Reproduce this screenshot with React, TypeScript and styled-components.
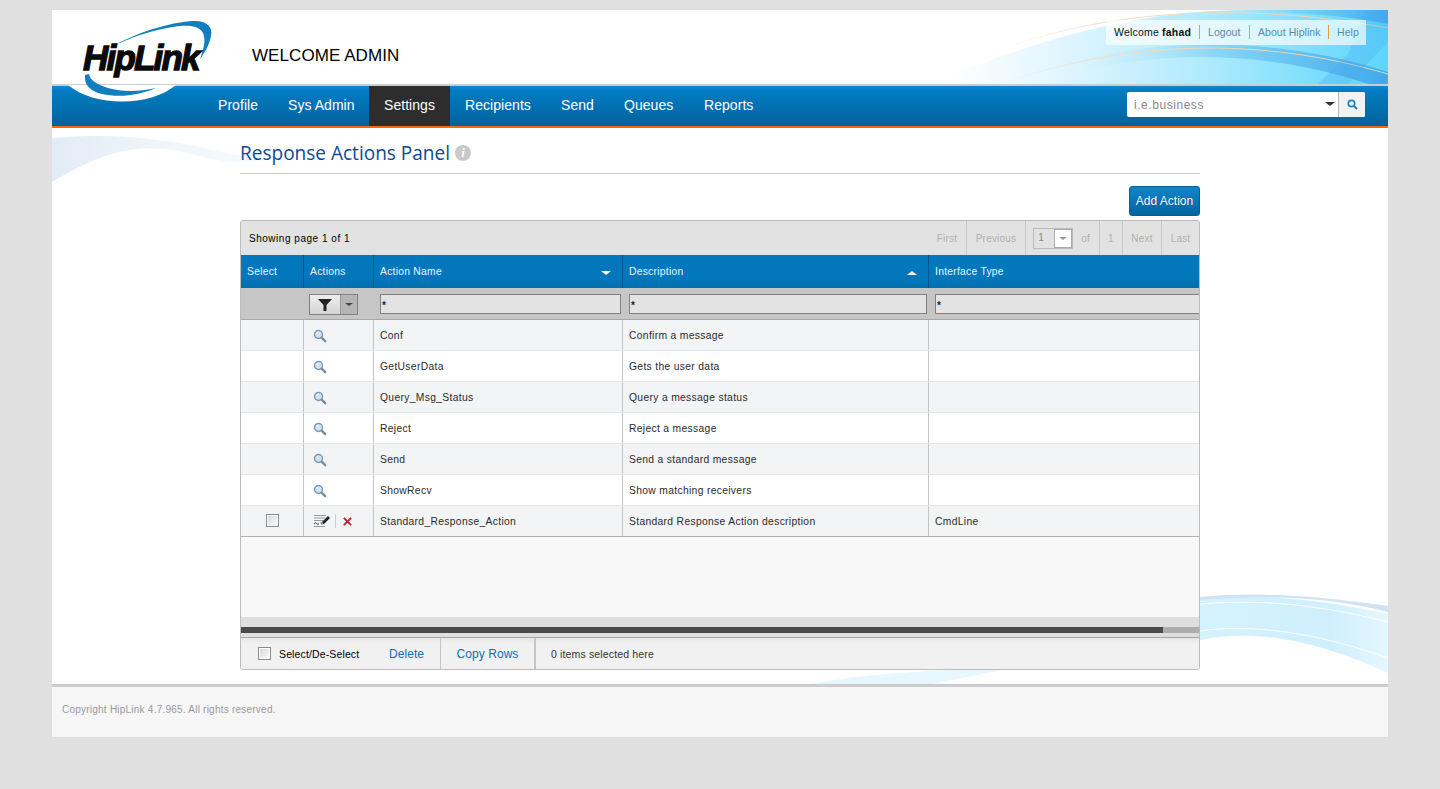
import React from 'react';
import styled, { createGlobalStyle } from 'styled-components';

const Global = createGlobalStyle`
  html, body { margin: 0; padding: 0; background: #e0e0e0; }
  body { font-family: "Liberation Sans", Arial, sans-serif; color: #222; }
  * { box-sizing: border-box; }
`;

const Page = styled.div`
  position: relative;
  width: 1336px;
  margin: 10px 0 0 52px;
  background: #fff;
  overflow: hidden;
`;

const Header = styled.header`
  position: relative;
  height: 74px;
  padding-left: 200px;
  display: flex;
  align-items: center;
  background: #fff;
`;
const HeaderArt = styled.svg`
  position: absolute;
  right: 0;
  top: 0;
`;
const Welcome = styled.h1`
  position: relative;
  margin: 18px 0 0;
  font-size: 17px;
  font-weight: 400;
  letter-spacing: 0.07px;
  color: #000;
  line-height: 20px;
`;
const TopLinks = styled.div`
  position: absolute;
  top: 10px;
  left: 1054px;
  width: 260px;
  height: 25px;
  padding: 0 0 2px 8px;
  display: flex;
  align-items: center;
  background: rgba(255, 255, 255, 0.68);
  font-size: 10.5px;
  letter-spacing: 0.05px;
`;
const Greeting = styled.span`
  color: #111;
  width: 85px;
  letter-spacing: 0.2px;
  white-space: nowrap;
  b { font-weight: 700; }
`;
const TopLink = styled.a<{ $w: number }>`
  width: ${p => p.$w}px;
  height: 14px;
  line-height: 14px;
  padding-left: 8px;
  border-left: 1px solid #e8a030;
  color: #5a88ad;
  white-space: nowrap;
`;

const GrayLine = styled.div`
  height: 2px;
  background: #ccc;
`;
const Nav = styled.nav`
  position: relative;
  height: 42px;
  padding-left: 151px;
  display: flex;
  background: linear-gradient(#0a86d0 0, #0a86d0 2px, #047dc4 3px, #00629c 100%);
  border-bottom: 2px solid #f46a0a;
`;
const NavItem = styled.a<{ $active?: boolean; $w: number }>`
  width: ${p => p.$w}px;
  height: 40px;
  padding: 0 0 2px 15px;
  display: flex;
  align-items: center;
  font-size: 14px;
  letter-spacing: 0.05px;
  color: #fff;
  white-space: nowrap;
  background: ${p => (p.$active ? '#2d2d2d' : 'transparent')};
`;
const Search = styled.div`
  position: absolute;
  left: 1075px;
  top: 6px;
  width: 238px;
  height: 25px;
  display: flex;
  background: #fff;
  border-radius: 2px;
`;
const SearchText = styled.div`
  flex: 1;
  padding-left: 7px;
  font-size: 12px;
  line-height: 26px;
  letter-spacing: 0.55px;
  color: #85888c;
  position: relative;
`;
const Caret = styled.i<{ $c: string; $s: number; $up?: boolean }>`
  display: block;
  width: 0;
  height: 0;
  border-left: ${p => p.$s}px solid transparent;
  border-right: ${p => p.$s}px solid transparent;
  ${p => (p.$up ? 'border-bottom' : 'border-top')}: ${p => Math.round(p.$s * 0.8)}px solid ${p => p.$c};
`;
const SearchCaret = styled.span`
  position: absolute;
  right: 3px;
  top: 10px;
`;
const SearchBtn = styled.div`
  width: 27px;
  border-left: 1px solid #b5b5b5;
  background: #f2f2f2;
  display: flex;
  align-items: center;
  justify-content: center;
  border-radius: 0 2px 2px 0;
`;

const Logo = styled.svg`
  position: absolute;
  left: 0;
  top: 0;
`;

const Content = styled.main`
  position: relative;
  height: 556px;
  padding-left: 188px;
  background: #fff;
`;
const ContentArt = styled.svg`
  position: absolute;
  left: 0;
  top: 0;
`;
const Column = styled.div`
  position: relative;
  width: 960px;
`;
const TitleRow = styled.div`
  height: 46px;
  display: flex;
  align-items: center;
  gap: 5px;
  padding-top: 4px;
  border-bottom: 1px solid #ccc;
`;
const Title = styled.h2`
  margin: 0;
  font-family: "Open Sans", sans-serif;
  font-size: 19.05px;
  font-weight: 400;
  color: #0b4a94;
  white-space: nowrap;
`;
const InfoIcon = styled.span`
  width: 16px;
  height: 16px;
  border-radius: 50%;
  background: #c9c9c9;
  color: #fff;
  font: italic 700 13px/16px "Liberation Serif", serif;
  text-align: center;
`;
const ActionBar = styled.div`
  height: 46px;
  padding-top: 12px;
  display: flex;
  justify-content: flex-end;
`;
const AddBtn = styled.button`
  width: 71px;
  height: 30px;
  padding: 0;
  border: 1px solid #0a5c90;
  border-radius: 3px;
  background: linear-gradient(#0e86cc, #05639f);
  color: #fff;
  font: 12px "Liberation Sans", Arial, sans-serif;
  text-shadow: 0 0 1px rgba(0,0,0,.4);
`;

const Grid = styled.section`
  height: 450px;
  border: 1px solid #bcbcbc;
  border-radius: 3px;
  background: #f8f8f8;
  overflow: hidden;
`;
const Pager = styled.div`
  height: 34px;
  display: flex;
  align-items: stretch;
  background: #e2e2e2;
  font-size: 10px;
`;
const PageInfo = styled.div`
  flex: 1;
  padding-left: 8px;
  line-height: 35px;
  color: #000;
  letter-spacing: 0.52px;
`;
const PagerCell = styled.div<{ $w: number; $first?: boolean }>`
  width: ${p => p.$w}px;
  display: flex;
  align-items: center;
  justify-content: center;
  gap: 8px;
  color: #b0b0b0;
  letter-spacing: 0.2px;
  border-left: ${p => (p.$first ? 'none' : '1px solid #c8c8c8')};
`;
const PageInput = styled.div`
  width: 40px;
  height: 21px;
  margin-left: -2px;
  border: 1px solid #bbb;
  display: flex;
  justify-content: space-between;
  padding-left: 4px;
  line-height: 17px;
  font-size: 10px;
  color: #888;
`;
const PageSelect = styled.div`
  width: 18px;
  height: 19px;
  border: 1px solid #aaa;
  background: #fff;
  display: flex;
  align-items: center;
  justify-content: center;
`;

const cols = '63px 70px 249px 306px 1fr';
const HeadRow = styled.div`
  display: grid;
  grid-template-columns: ${cols};
  height: 33px;
  background: linear-gradient(#0377bc 0, #0377bc 70%, #016eae 100%);
`;
const HeadCell = styled.div`
  position: relative;
  display: flex;
  align-items: center;
  justify-content: space-between;
  padding: 0 11px 0 6px;
  font-size: 10.3px;
  letter-spacing: 0.27px;
  color: #eaf6ff;
  border-right: 1px solid #03568c;
  &:last-child { border-right: 0; }
`;
const SortMark = styled.span`
  margin: 3px 0 0;
`;
const FilterRow = styled.div`
  display: grid;
  grid-template-columns: ${cols};
  height: 32px;
  background: #c6c6c6;
  border-bottom: 1px solid #a8a8a8;
`;
const FilterCell = styled.div`
  padding: 6px 2px 0 6px;
  min-width: 0;
`;
const FilterBtnCell = styled(FilterCell)`
  padding-left: 5px;
`;
const FilterInput = styled.div<{ $over?: boolean }>`
  width: ${p => (p.$over ? '290px' : '100%')};
  height: 20px;
  border: 1px solid #808080;
  background: #e3e3e3;
  font: 700 10px/22px "Liberation Sans", Arial, sans-serif;
  color: #15233f;
  padding-left: 1px;
  overflow: hidden;
`;
const FilterBtn = styled.div`
  display: flex;
  width: 49px;
  height: 21px;
  border: 1px solid #808080;
  background: linear-gradient(#eee, #d4d4d4);
`;
const FilterFunnel = styled.span`
  flex: 1;
  display: flex;
  align-items: center;
  justify-content: center;
`;
const FilterDrop = styled.span`
  width: 17px;
  border-left: 1px solid #999;
  background: #b5b5b5;
  display: flex;
  align-items: center;
  justify-content: center;
`;

const Row = styled.div<{ $odd: boolean; $last: boolean }>`
  display: grid;
  grid-template-columns: ${cols};
  height: 31px;
  background: ${p => (p.$odd ? '#f3f4f6' : '#fff')};
  border-bottom: 1px solid ${p => (p.$last ? '#b0b0b0' : '#e6e6e6')};
`;
const Cell = styled.div`
  display: flex;
  align-items: center;
  padding-left: 6px;
  font-size: 10.3px;
  color: #2a2a2a;
  letter-spacing: 0.33px;
  border-right: 1px solid #c4c4c4;
  white-space: nowrap;
  &:last-child { border-right: 0; }
`;
const CheckCell = styled(Cell)`
  padding: 0 0 2px 25px;
`;
const IconCell = styled(Cell)`
  padding-left: 9px;
`;
const Check = styled.span`
  display: block;
  width: 13px;
  height: 13px;
  border: 1px solid #8c8c8c;
  background: linear-gradient(135deg, #cfd3da, #fff);
  box-shadow: inset 0 0 0 1px #fff;
`;
const IconSep = styled.span`
  width: 1px;
  height: 14px;
  background: #ccc;
  margin: 0 7px 0 4px;
`;
const Spacer = styled.div`
  height: 80px;
`;
const ScrollArea = styled.div`
  height: 21px;
  padding-top: 10px;
  background: #dedede;
  border-bottom: 1px solid #a6a6a6;
`;
const ScrollTrack = styled.div`
  height: 6px;
  background: #adadad;
`;
const ScrollThumb = styled.div`
  width: 922px;
  height: 6px;
  background: #4a4a4a;
`;
const GridFoot = styled.div`
  height: 31px;
  display: flex;
  align-items: center;
  background: linear-gradient(#e6e6e6, #f1f1f1 6px);
  font-size: 11px;
`;
const FootCheck = styled.div`
  width: 148px;
  padding-left: 17px;
  display: flex;
  align-items: center;
  gap: 8px;
  color: #000;
  font-size: 10.5px;
  letter-spacing: 0.13px;
  white-space: nowrap;
`;
const FootLink = styled.a<{ $w: number; $line?: boolean }>`
  width: ${p => p.$w}px;
  height: 31px;
  line-height: 33px;
  font-size: 12px;
  letter-spacing: 0.05px;
  color: #0a70b8;
  text-align: ${p => (p.$line ? 'center' : 'left')};
  border-right: 1px solid #c4c4c4;
  white-space: nowrap;
`;
const FootNote = styled.div`
  height: 31px;
  padding-left: 15px;
  line-height: 32px;
  border-left: 1px solid #c4c4c4;
  color: #333;
  font-size: 10.5px;
  letter-spacing: 0.15px;
`;

const Footer = styled.footer`
  height: 53px;
  border-top: 3px solid #ccc;
  background: #f6f6f6;
  padding: 17px 0 0 10px;
  font-size: 10px;
  letter-spacing: 0.23px;
  color: #999;
`;

const MagnifierSvg = styled.svg`
  margin-top: 2px;
`;
const Magnifier = () => (
  <MagnifierSvg width="14" height="14" viewBox="0 0 14 14">
    <circle cx="5.500" cy="5.500" r="4" fill="#d3e2f1" stroke="#7b98b8" strokeWidth="1.400" />
    <path d="M3.500 4.500a2.500 2.500 0 0 1 2-1.500" stroke="#fff" fill="none" />
    <path d="M8.600 8.600l3.600 3.600" stroke="#7d8c9e" strokeWidth="2.400" strokeLinecap="round" />
  </MagnifierSvg>
);
const EditIcon = () => (
  <svg width="18" height="14" viewBox="0 0 18 14">
    <path d="M1 1.500h12M1 4h11M1 6.500h9M7 9h2M1 12.500h11" stroke="#9a9a9a" strokeWidth="1" />
    <path d="M1 10c1-1.500 2-1.500 2.500-.5s1.500.8 2.500 0" stroke="#333" fill="none" />
    <path d="M8 10.500l1-2.500 6-6 2 2-6 6z" fill="#222" />
    <path d="M8 10.500l1-2.500 1.500 1.500z" fill="#caa" />
  </svg>
);
const RedX = () => (
  <svg width="9" height="9" viewBox="0 0 10 10">
    <path d="M1 1l8 8M9 1l-8 8" stroke="#c8202c" strokeWidth="2.200" />
  </svg>
);
const Funnel = () => (
  <svg width="14" height="12" viewBox="0 0 14 12">
    <path d="M0 0h14L8.500 6v6h-3V6z" fill="#222" />
  </svg>
);

const rows = [
  ['Conf', 'Confirm a message', ''],
  ['GetUserData', 'Gets the user data', ''],
  ['Query_Msg_Status', 'Query a message status', ''],
  ['Reject', 'Reject a message', ''],
  ['Send', 'Send a standard message', ''],
  ['ShowRecv', 'Show matching receivers', ''],
  ['Standard_Response_Action', 'Standard Response Action description', 'CmdLine'],
];

const navItems: [string, number][] = [
  ['Profile', 70], ['Sys Admin', 96], ['Settings', 81], ['Recipients', 96], ['Send', 63], ['Queues', 80], ['Reports', 65],
];

export default function App() {
  return (
    <Page>
      <Global />
      <Header>
        <HeaderArt width="460" height="74" viewBox="0 0 460 74">
          <defs>
            <linearGradient id="sky" x1="0" x2="1" y1="0" y2="0">
              <stop offset="0.05" stopColor="#fff" />
              <stop offset="0.32" stopColor="#dcf4fe" />
              <stop offset="0.6" stopColor="#b0eafd" />
              <stop offset="1" stopColor="#5cd6fc" />
            </linearGradient>
            <linearGradient id="band" x1="0" x2="1" y1="0" y2="0">
              <stop offset="0.1" stopColor="#fff" stopOpacity="0" />
              <stop offset="0.55" stopColor="#70c6f0" stopOpacity="0.55" />
              <stop offset="1" stopColor="#3a9ee8" stopOpacity="0.8" />
            </linearGradient>
            <linearGradient id="thread" x1="0" x2="1" y1="0" y2="0">
              <stop offset="0" stopColor="#f6d9c0" stopOpacity="0" />
              <stop offset="0.3" stopColor="#f6d9c0" />
              <stop offset="1" stopColor="#dcd8b0" />
            </linearGradient>
          </defs>
          <path d="M0 74C100 34 200 0 320 0H460V74Z" fill="url(#sky)" />
          <path d="M260 5C330 0 400 2 460 14V0H300Z" fill="url(#band)" />
          <path d="M70 74C190 28 330 20 460 62V74H440C330 36 200 40 120 74Z" fill="url(#band)" />
          <path d="M72 40C190 -4 330 -6 460 18" stroke="url(#thread)" fill="none" />
          <path d="M72 74C200 30 330 26 460 64" stroke="url(#thread)" fill="none" />
          <path d="M438 0L460 0V32L420 74H390L420 44Z" fill="#4aa8ee" opacity="0.3" />
        </HeaderArt>
        <Welcome>WELCOME ADMIN</Welcome>
        <TopLinks>
          <Greeting>Welcome <b>fahad</b></Greeting>
          <TopLink $w={50}>Logout</TopLink>
          <TopLink $w={79}>About Hiplink</TopLink>
          <TopLink $w={38}>Help</TopLink>
        </TopLinks>
      </Header>
      <GrayLine />
      <Nav>
        {navItems.map(([n, w]) => (
          <NavItem key={n} $w={w} $active={n === 'Settings'}>{n}</NavItem>
        ))}
        <Search>
          <SearchText>
            i.e.business
            <SearchCaret><Caret $c="#333" $s={5} /></SearchCaret>
          </SearchText>
          <SearchBtn>
            <svg width="11" height="11" viewBox="0 0 11 11">
              <circle cx="4.500" cy="4.500" r="3.200" fill="none" stroke="#1c84c6" strokeWidth="1.700" />
              <path d="M7 7l3 3" stroke="#1c84c6" strokeWidth="2" />
            </svg>
          </SearchBtn>
        </Search>
      </Nav>
      <Logo width="200" height="100" viewBox="0 0 200 100">
        <path d="M16 75C42 97 98 97 124 75Z" fill="#fff" />
        <path d="M63 35C90 20 125 11 143 11C156 11 161 18 159 26C157 36 153 42 148 49C152 38 154 30 151 23C148 17 140 15 128 16C108 18 85 25 63 35Z" fill="#0f7fc0" />
        <path d="M33 65C32 74 37 81 50 84C68 88 88 85 104 78C86 82 70 82 56 78C44 74 38 70 37 64Z" fill="#0f7fc0" />
        <text x="31" y="60" fontFamily="Liberation Sans, Arial, sans-serif" fontWeight="700" fontStyle="italic" fontSize="35" letterSpacing="-1.800" fill="#0a0a0a" stroke="#0a0a0a" strokeWidth="1.300">HipLink</text>
      </Logo>
      <Content>
        <ContentArt width="1336" height="556" viewBox="0 0 1336 556">
          <defs>
            <linearGradient id="leftWave" x1="0" x2="1" y1="0" y2="0">
              <stop offset="0" stopColor="#e2ecf6" />
              <stop offset="0.5" stopColor="#f0f7fb" />
              <stop offset="1" stopColor="#e8f8fe" stopOpacity="0.3" />
            </linearGradient>
            <linearGradient id="rightWave" x1="0" x2="1" y1="0" y2="0">
              <stop offset="0" stopColor="#d4f2fe" />
              <stop offset="0.7" stopColor="#d0effd" />
              <stop offset="1" stopColor="#e4f7fe" />
            </linearGradient>
          </defs>
          <path d="M0 10C70 4 120 12 170 24C200 32 220 26 240 22C200 42 170 34 130 24C80 12 40 30 0 54Z" fill="url(#leftWave)" />
          <path d="M1148 470C1220 464 1290 476 1336 486V545C1270 515 1210 500 1148 512Z" fill="url(#rightWave)" />
          <path d="M1148 476C1220 470 1280 480 1336 494M1148 503C1210 494 1280 510 1336 530" stroke="#fff" fill="none" />
          <path d="M1148 469C1220 462 1290 472 1336 478V484C1280 470 1220 466 1148 472Z" fill="#cfe3f4" />
          <path d="M760 556C800 548 850 544 900 542L960 540L880 556Z" fill="#e6f7fe" />
        </ContentArt>
        <Column>
          <TitleRow>
            <Title>Response Actions Panel</Title>
            <InfoIcon>i</InfoIcon>
          </TitleRow>
          <ActionBar>
            <AddBtn>Add Action</AddBtn>
          </ActionBar>
          <Grid>
            <Pager>
              <PageInfo>Showing page 1 of 1</PageInfo>
              <PagerCell $w={38} $first>First</PagerCell>
              <PagerCell $w={59}>Previous</PagerCell>
              <PagerCell $w={74}>
                <PageInput>1<PageSelect><Caret $c="#999" $s={4} /></PageSelect></PageInput>
                <span>of</span>
              </PagerCell>
              <PagerCell $w={23}>1</PagerCell>
              <PagerCell $w={39}>Next</PagerCell>
              <PagerCell $w={38}>Last</PagerCell>
            </Pager>
            <HeadRow>
              <HeadCell>Select</HeadCell>
              <HeadCell>Actions</HeadCell>
              <HeadCell>Action Name<SortMark><Caret $c="#fdf6e3" $s={5} /></SortMark></HeadCell>
              <HeadCell>Description<SortMark><Caret $c="#fdf6e3" $s={5} $up /></SortMark></HeadCell>
              <HeadCell>Interface Type</HeadCell>
            </HeadRow>
            <FilterRow>
              <FilterCell />
              <FilterBtnCell>
                <FilterBtn>
                  <FilterFunnel><Funnel /></FilterFunnel>
                  <FilterDrop><Caret $c="#444" $s={4} /></FilterDrop>
                </FilterBtn>
              </FilterBtnCell>
              <FilterCell><FilterInput>*</FilterInput></FilterCell>
              <FilterCell><FilterInput>*</FilterInput></FilterCell>
              <FilterCell><FilterInput $over>*</FilterInput></FilterCell>
            </FilterRow>
            {rows.map((r, i) => {
              const editable = i === rows.length - 1;
              return (
                <Row key={r[0]} $odd={i % 2 === 0} $last={editable}>
                  {editable ? <CheckCell><Check /></CheckCell> : <Cell />}
                  <IconCell>
                    {editable ? <><EditIcon /><IconSep /><RedX /></> : <Magnifier />}
                  </IconCell>
                  <Cell>{r[0]}</Cell>
                  <Cell>{r[1]}</Cell>
                  <Cell>{r[2]}</Cell>
                </Row>
              );
            })}
            <Spacer />
            <ScrollArea>
              <ScrollTrack><ScrollThumb /></ScrollTrack>
            </ScrollArea>
            <GridFoot>
              <FootCheck><Check />Select/De-Select</FootCheck>
              <FootLink $w={52}>Delete</FootLink>
              <FootLink $w={94} $line>Copy Rows</FootLink>
              <FootNote>0 items selected here</FootNote>
            </GridFoot>
          </Grid>
        </Column>
      </Content>
      <Footer>Copyright HipLink 4.7.965. All rights reserved.</Footer>
    </Page>
  );
}
